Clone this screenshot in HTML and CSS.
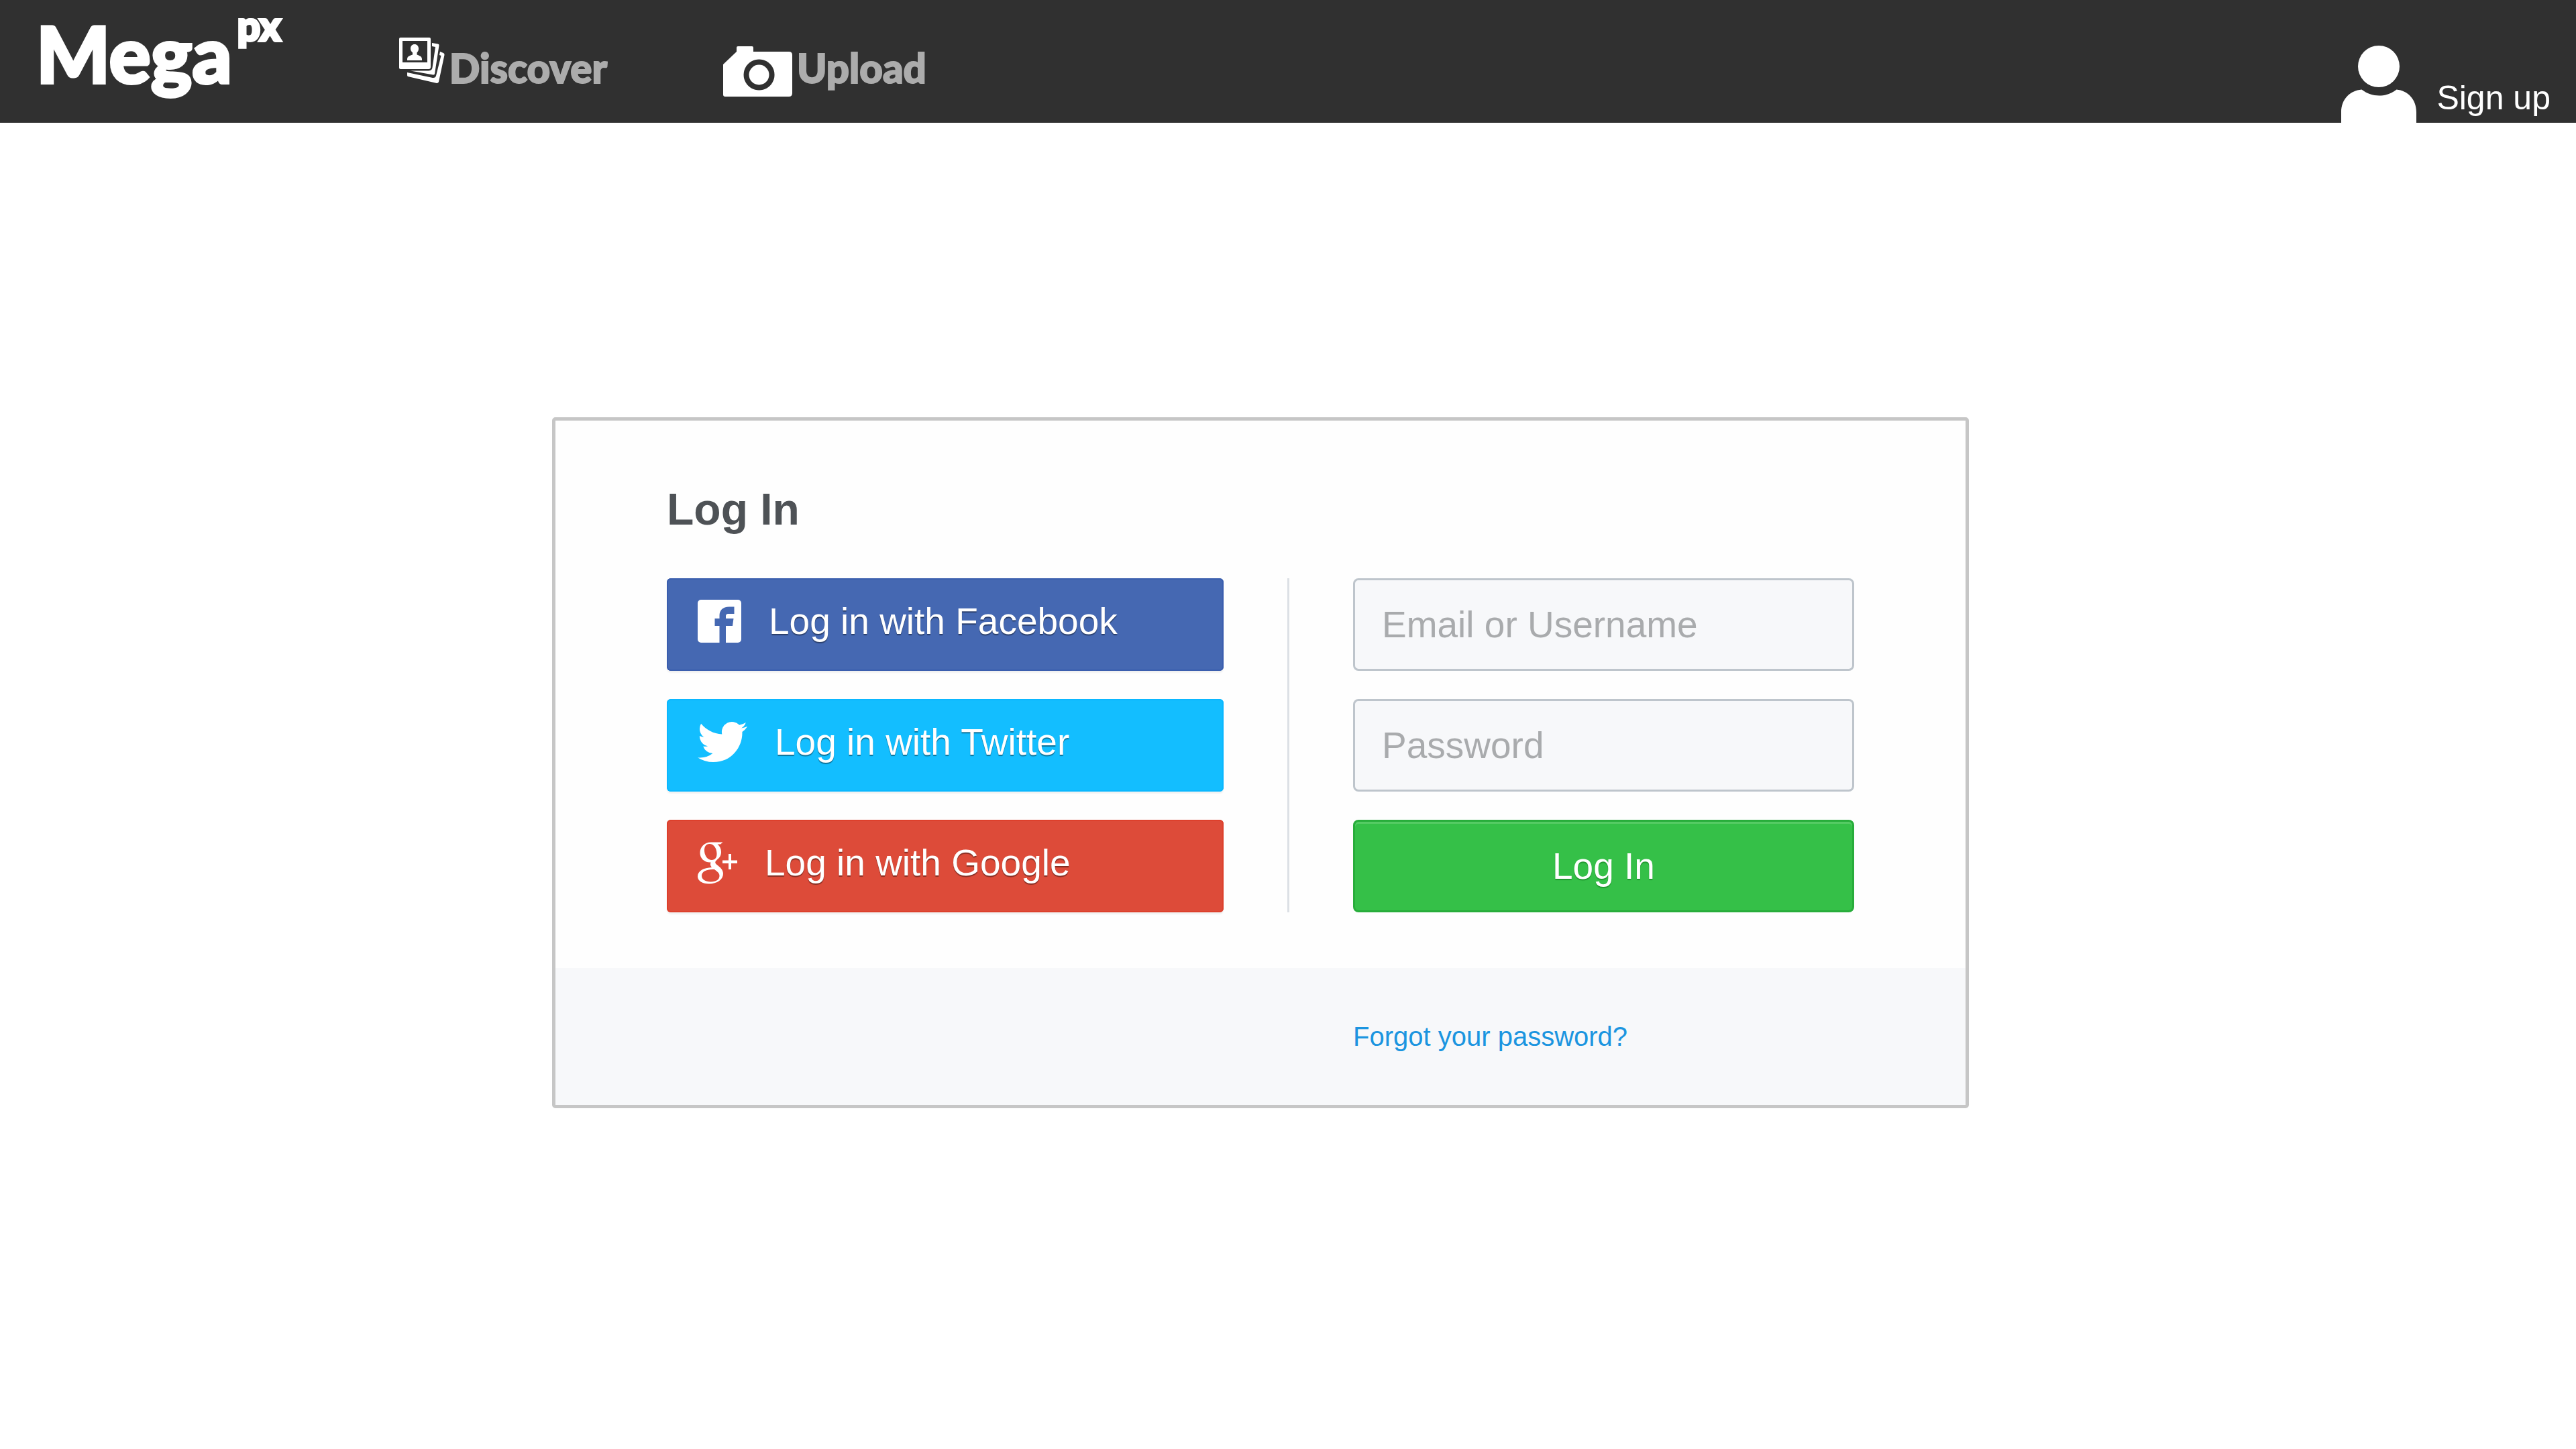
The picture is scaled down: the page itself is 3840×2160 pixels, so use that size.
FILE: index.html
```html
<!DOCTYPE html>
<html lang="en">
<head>
<meta charset="utf-8">
<meta name="viewport" content="width=device-width, initial-scale=1">
<title>Mega px - Log In</title>
<link rel="stylesheet" href="styles.css">
</head>
<body>
<header class="site-header">
  <a class="logo" href="#">Mega<sup class="logo-sup">px</sup></a>
  <nav class="main-nav">
    <a class="nav-link" href="#">
      <svg class="icon-discover" viewBox="0 0 68 68" aria-hidden="true">
        <path fill-rule="evenodd" d="M2 0H45Q47 0 47 2V44Q47 47 44 47H2Q0 47 0 45V2Q0 0 2 0ZM5 5V37H42V5Z"/>
        <path d="M23 10C26.500 10 29 12.500 29 16.500C29 19.500 28 21 26.500 22.500V25.500C30 27 34 28 34 32V34H12V32C12 28 16 27 20 25.500V22.500C18.500 21 17 19.500 17 16.500C17 12.500 19.500 10 23 10Z"/>
        <path d="M49 8L58 9.500Q60 10 59.500 12L53 54Q52.500 56 50.500 55.500L17 49.500H44Q49 49 49.500 45L54 14L49 13Z"/>
        <path d="M61 21L66 23Q68 24 67.500 26L59 66Q58.500 68 56 68L13 58Q12 57.500 12 56V52L50 60Q54 60.500 55 57L62.500 27L60 26Z"/>
      </svg>
      <span>Discover</span>
    </a>
    <a class="nav-link" href="#">
      <svg class="icon-camera" viewBox="0 0 103 75" aria-hidden="true">
        <path fill-rule="evenodd" d="M22 0H43Q45 0 45 2V8H98Q103 8 103 13V70Q103 75 98 75H3Q0 75 0 72V27L20 8V2Q20 0 22 0ZM53.500 19.500a23 23 0 1 0 .1 0Z"/>
        <circle cx="53.500" cy="42.500" r="15"/>
      </svg>
      <span>Upload</span>
    </a>
  </nav>
  <a class="sign-up" href="#">
    <svg class="icon-person" viewBox="0 0 112 115" aria-hidden="true">
      <circle cx="56" cy="31" r="31"/>
      <path d="M0 115V99C0 80 13 67 30.500 65.500C46 77.500 67 77.500 82.500 65.500C99 67 112 80 112 99V115Z"/>
    </svg>
    <span>Sign up</span>
  </a>
</header>

<main class="page">
  <section class="card">
    <div class="card-body">
      <h1 class="card-title">Log In</h1>
      <div class="columns">
        <div class="stack">
          <button class="social facebook" type="button">
            <svg class="icon-facebook" viewBox="0 0 65 64" aria-hidden="true">
              <path d="M5 0H60a5 5 0 0 1 5 5V59a5 5 0 0 1-5 5H42V39H52L53.500 28H42V25C42 22 43 21 46 21H54.500V10.500H47C37 10.500 32.500 16 32.500 24V28H25.500V39H32.500V64H5a5 5 0 0 1-5-5V5a5 5 0 0 1 5-5Z"/>
            </svg>
            <span>Log in with Facebook</span>
          </button>
          <button class="social twitter" type="button">
            <svg class="icon-twitter" viewBox="0 2.200 24 19.600" aria-hidden="true">
              <path d="M23.953 4.570a10 10 0 0 1-2.825.775 4.958 4.958 0 0 0 2.163-2.723c-.951.555-2.005.959-3.127 1.184a4.920 4.920 0 0 0-8.384 4.482C7.690 8.095 4.067 6.130 1.640 3.162a4.822 4.822 0 0 0-.666 2.475c0 1.710.870 3.213 2.188 4.096a4.904 4.904 0 0 1-2.228-.616v.060a4.923 4.923 0 0 0 3.946 4.827 4.996 4.996 0 0 1-2.212.085 4.936 4.936 0 0 0 4.604 3.417 9.867 9.867 0 0 1-6.102 2.105c-.390 0-.779-.023-1.170-.067a13.995 13.995 0 0 0 7.557 2.209c9.053 0 13.998-7.496 13.998-13.985 0-.210 0-.420-.015-.630A9.935 9.935 0 0 0 24 4.590z"/>
            </svg>
            <span>Log in with Twitter</span>
          </button>
          <button class="social google" type="button">
            <svg class="icon-google" viewBox="0 0 59 63" aria-hidden="true">
              <path fill-rule="evenodd" d="M20 .5H37.500L34 3.500H29.500C33 6.500 35 10 35 15C35 21 32 24 28.500 27C25.500 29.500 25.500 31.500 28.500 34C33 37.500 38 41 38 47.500C38 56 29 62.500 17 62.500C7 62.500 0 58 0 51.500C0 43 9 38.500 21 38C19 35.500 18.500 33.500 19.500 30.500C10 31 3.500 24.500 3.500 16.500C3.500 7.500 10 .5 20 .5ZM17.500 3C12.500 3 10 7 10 12.500C10 20 14.500 27 21 27C26 27 28.500 23.500 28.500 18C28.500 10 24.500 3 17.500 3ZM22 41C12.500 41 6 44.500 6 50.500C6 56 11.500 59.500 19.500 59.500C28 59.500 32.500 56 32.500 50.500C32.500 46.500 29.500 44.500 25 41Z"/>
              <path d="M46 18H50V27.500H59V32H50V41H46V32H37V27.500H46Z"/>
            </svg>
            <span>Log in with Google</span>
          </button>
        </div>
        <div class="divider"></div>
        <form class="stack">
          <input class="field" type="text" placeholder="Email or Username" aria-label="Email or Username">
          <input class="field" type="password" placeholder="Password" aria-label="Password">
          <button class="submit" type="submit">Log In</button>
        </form>
      </div>
    </div>
    <div class="card-footer columns">
      <a class="forgot" href="#">Forgot your password?</a>
    </div>
  </section>
</main>
</body>
</html>
```
FILE: styles.css
```css
* {
  box-sizing: border-box;
}

body {
  margin: 0;
  background: #fff;
  font-family: "Liberation Sans", Arial, sans-serif;
}

a {
  text-decoration: none;
}

svg {
  display: block;
  flex: none;
  fill: #fff;
}

/* Header */
.site-header {
  display: flex;
  align-items: baseline;
  min-height: 183px;
  padding: 24px 38px 0 54px;
  background: #303030;
}

.logo {
  color: #fff;
  font-family: Lato, sans-serif;
  font-size: 116px;
  font-weight: 900;
  line-height: 112px;
  -webkit-text-stroke: 4px currentColor;
}

.logo-sup {
  margin-left: 8px;
  font-size: 60px;
  line-height: 0;
  vertical-align: 63px;
}

.main-nav {
  display: flex;
  align-items: baseline;
  gap: 173px;
  margin-left: 176px;
}

.nav-link {
  display: flex;
  align-items: baseline;
  gap: 7px;
  color: #acacac;
  font-family: Lato, sans-serif;
  font-size: 60px;
  font-weight: 900;
  line-height: 64px;
  -webkit-text-stroke: 2px currentColor;
}

.icon-discover {
  width: 68px;
  height: 68px;
}

.icon-camera {
  align-self: flex-end;
  width: 103px;
  height: 75px;
  margin-bottom: 6px;
}

.nav-link svg {
  -webkit-text-stroke: 0;
}

.sign-up {
  display: flex;
  align-items: flex-end;
  align-self: flex-end;
  gap: 30px;
  margin-left: auto;
  color: #fff;
  font-size: 50px;
  line-height: 74px;
}

.icon-person {
  width: 112px;
  height: 115px;
}

/* Log in card */
.page {
  padding: 439px 82px 80px 0;
}

.card {
  max-width: 2112px;
  margin: 0 auto;
  border: 5px solid #c6c6c6;
  border-radius: 5px;
  background: #fefefe;
}

.card-body {
  padding: 94px 166px 83px;
}

.card-title {
  margin: 0 0 65px;
  color: #4e5256;
  font-size: 66px;
  line-height: 76px;
}

.columns {
  display: grid;
  grid-template-columns: 830fr 3px 747fr;
  column-gap: 95px;
}

.stack {
  display: flex;
  flex-direction: column;
  gap: 42px;
}

.divider {
  background: #dce0e5;
}

.social {
  display: flex;
  align-items: center;
  gap: 41px;
  height: 138px;
  padding: 0 46px 10px;
  border: 0;
  border-radius: 6px;
  color: #fff;
  font-family: inherit;
  font-size: 55px;
  text-shadow: 0 2px 1px rgba(0, 0, 0, 0.4);
}

.facebook {
  background: #4568b2;
  box-shadow: inset 0 0 0 2px #3a5eae, 0 3px 2px rgba(0, 0, 0, 0.05);
}

.twitter {
  background: #13beff;
  box-shadow: inset 0 0 0 2px #0ab7ff, 0 3px 2px rgba(0, 0, 0, 0.05);
}

.google {
  background: #dd4b39;
  box-shadow: inset 0 0 0 2px #dd402c, 0 3px 2px rgba(0, 0, 0, 0.05);
}

.icon-facebook {
  width: 65px;
  height: 64px;
}

.icon-twitter {
  width: 74px;
  height: 62px;
}

.icon-google {
  width: 59px;
  height: 63px;
}

.field {
  width: 100%;
  height: 138px;
  padding: 0 40px;
  border: 3px solid #bec5cc;
  border-radius: 8px;
  background: #f7f8fa;
  color: #4e5256;
  font-family: inherit;
  font-size: 55px;
}

.field::placeholder {
  color: #a9abad;
  opacity: 1;
}

.submit {
  height: 138px;
  border: 3px solid #28ad3b;
  border-radius: 8px;
  background: #35c048;
  box-shadow: inset 0 3px 0 #55cb64;
  color: #fff;
  font-family: inherit;
  font-size: 55px;
  text-shadow: 0 2px 1px rgba(0, 90, 10, 0.4);
}

.card-footer {
  padding: 80px 166px;
  background: #f7f8fa;
}

.forgot {
  grid-column: 3;
  color: #1b95e0;
  font-size: 40px;
  line-height: 44px;
}
```
